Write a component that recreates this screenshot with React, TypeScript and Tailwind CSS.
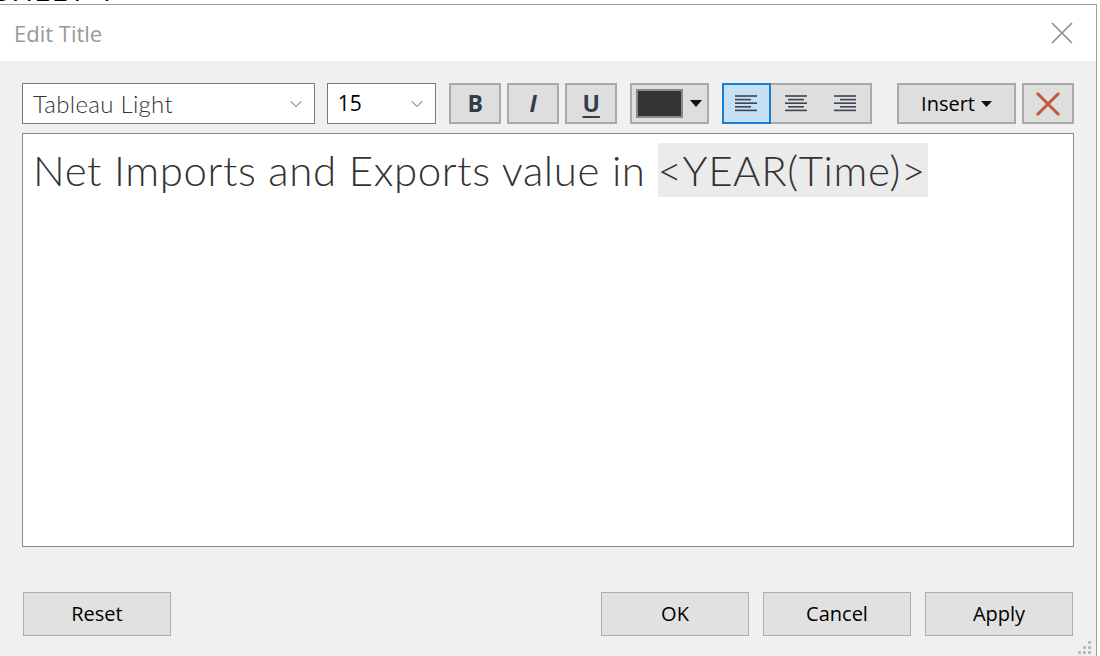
import React from 'react';
import { ChevronDown } from 'lucide-react';

const ui = { fontFamily: '"Open Sans", "Noto Sans", sans-serif' };
const tab = { fontFamily: 'Lato, "Open Sans", sans-serif' };

function AlignIcon({ kind }: { kind: 'left' | 'center' | 'right' }) {
  // four bars, alternating long / short
  const rows = [
    [0, 22],
    [kind === 'left' ? 0 : kind === 'center' ? 3 : 6, kind === 'left' ? 16 : kind === 'center' ? 19 : 22],
    [0, 22],
    [kind === 'left' ? 0 : kind === 'center' ? 3 : 6, kind === 'left' ? 16 : kind === 'center' ? 19 : 22],
    [0, 22],
  ];
  return (
    <svg width="22" height="17" viewBox="0 0 22 17">
      {rows.map(([x1, x2], i) => (
        <line key={i} x1={x1} x2={x2} y1={1 + i * 3.6} y2={1 + i * 3.6} stroke="#3d4450" strokeWidth="1.6" />
      ))}
    </svg>
  );
}

function Btn({ children, className = '' }: { children: React.ReactNode; className?: string }) {
  return (
    <button
      className={`h-[44px] w-[148px] border border-[#adadad] bg-[#e1e1e1] text-[20px] text-black ${className}`}
      style={ui}
    >
      {children}
    </button>
  );
}

export default function App() {
  return (
    <div className="w-[1100px] h-[656px] overflow-hidden bg-white flex flex-col">
      {/* sheet title behind the dialog, only the bottom sliver shows */}
      <div className="h-[4px] overflow-hidden flex items-end shrink-0">
        <span className="text-[30px] leading-none text-black -mb-[1px] -ml-[6px] tracking-wide" style={ui}>
          SHEET 4
        </span>
      </div>

      <div className="flex-1 w-[1097px] border-t border-r border-[#a0a0a0] flex flex-col">
        {/* title bar */}
        <div className="h-[56px] bg-white flex items-center justify-between pl-[14px] pr-[23px] shrink-0">
          <span className="text-[22px] text-[#999999] pt-[1px]" style={ui}>Edit Title</span>
          <svg width="22" height="22" viewBox="0 0 22 22">
            <path d="M1 1L21 21M21 1L1 21" stroke="#8a8a8a" strokeWidth="1.6" />
          </svg>
        </div>

        <div className="flex-1 bg-[#f0f0f0] pl-[22px] pr-[22px] pt-[22px] flex flex-col">
          {/* toolbar */}
          <div className="flex items-center h-[41px]">
            <div className="w-[294px] h-[41px] bg-white border border-[#7a7a7a] flex items-center justify-between pl-[10px] pr-[8px]">
              <span className="text-[24px] tracking-[0.3px] text-[#333] font-light" style={tab}>Tableau Light</span>
              <ChevronDown size={20} strokeWidth={1.2} color="#555" />
            </div>
            <div className="ml-[12px] w-[110px] h-[41px] bg-white border border-[#7a7a7a] flex items-center justify-between pl-[10px] pr-[8px]">
              <span className="text-[21px] text-black" style={ui}>15</span>
              <ChevronDown size={20} strokeWidth={1.2} color="#555" />
            </div>

            <div className="ml-[13px] flex gap-[6px]">
              <div className="w-[52px] h-[41px] border-2 border-[#a9a9a9] bg-[#dedede] flex items-center justify-center text-[23px] font-bold text-[#333c4a]" style={ui}>B</div>
              <div className="w-[52px] h-[41px] border-2 border-[#a9a9a9] bg-[#dedede] flex items-center justify-center text-[23px] font-bold italic text-[#333c4a]" style={ui}>I</div>
              <div className="w-[52px] h-[41px] border-2 border-[#a9a9a9] bg-[#dedede] flex items-center justify-center text-[23px] font-bold underline underline-offset-4 text-[#333c4a]" style={ui}>U</div>
            </div>

            <div className="ml-[13px] w-[79px] h-[41px] border-2 border-[#a9a9a9] bg-[#dedede] flex items-center pl-[4px] gap-[7px]">
              <div className="w-[47px] h-[29px] bg-[#333333] border-2 border-[#8a8a8a]" />
              <svg width="12" height="7" viewBox="0 0 12 7"><path d="M0 0H12L6 7Z" fill="#111" /></svg>
            </div>

            <div className="ml-[13px] flex h-[41px] border-2 border-[#a9a9a9] bg-[#dedede]">
              <div className="w-[49px] -m-[2px] mr-0 border-2 border-[#1b7fd1] bg-[#c6e0f6] flex items-center justify-center">
                <AlignIcon kind="left" />
              </div>
              <div className="w-[50px] flex items-center justify-center"><AlignIcon kind="center" /></div>
              <div className="w-[49px] flex items-center justify-center"><AlignIcon kind="right" /></div>
            </div>

            <div className="ml-[25px] w-[120px] h-[41px] border-2 border-[#a9a9a9] bg-[#dedede] flex items-center justify-center gap-[6px]">
              <span className="text-[20px] text-black" style={ui}>Insert</span>
              <svg width="11" height="6" viewBox="0 0 11 6"><path d="M0 0H11L5.5 6Z" fill="#111" /></svg>
            </div>
            <div className="ml-[6px] w-[52px] h-[41px] border-2 border-[#a9a9a9] bg-[#dedede] flex items-center justify-center">
              <svg width="26" height="26" viewBox="0 0 26 26">
                <path d="M2 2L24 24M24 2L2 24" stroke="#c4563c" strokeWidth="3" />
              </svg>
            </div>
          </div>

          {/* text editor */}
          <div className="mt-[9px] h-[414px] bg-white border border-[#8a8a8a] pl-[10px] pt-[9px]">
            <p className="text-[42px] leading-[54px] tracking-[0.6px] text-[#333333] font-light" style={tab}>
              Net Imports and Exports value in <span className="bg-[#ebebeb] py-[2px] pr-[2px]">&lt;YEAR(Time)&gt;</span>
            </p>
          </div>

          {/* footer buttons */}
          <div className="mt-[45px] flex items-start">
            <Btn className="ml-px">Reset</Btn>
            <div className="ml-auto flex gap-[14px] mr-px">
              <Btn>OK</Btn>
              <Btn>Cancel</Btn>
              <Btn>Apply</Btn>
            </div>
          </div>
          <div className="flex justify-end -mr-[18px] mt-[5px]">
            <svg width="14" height="14" viewBox="0 0 14 14">
              {[[10, 0], [5, 5], [10, 5], [0, 10], [5, 10], [10, 10]].map(([x, y], i) => (
                <rect key={i} x={x} y={y} width="3" height="3" fill="#bdbdbd" />
              ))}
            </svg>
          </div>
        </div>
      </div>
    </div>
  );
}
